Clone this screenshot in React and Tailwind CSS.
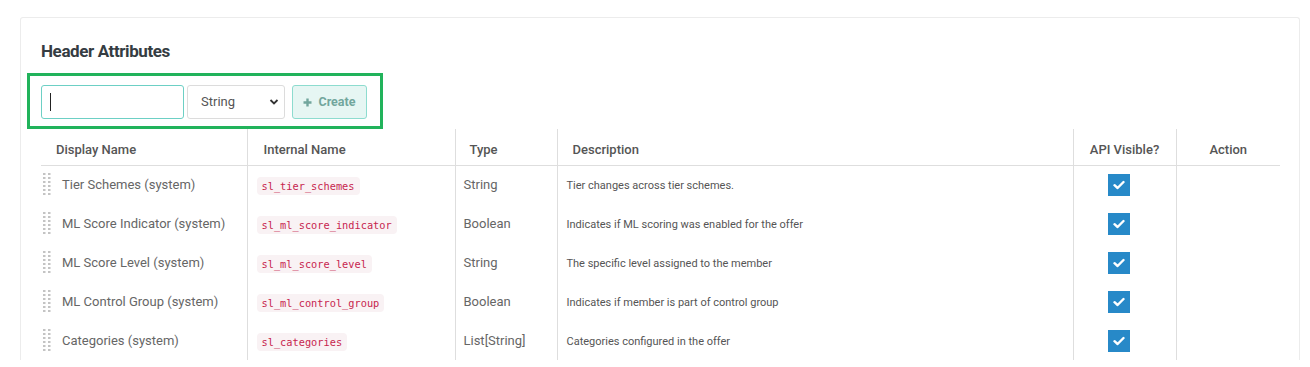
import React from 'react';

const rows = [
    { name: 'Tier Schemes (system)', internal: 'sl_tier_schemes', type: 'String', description: 'Tier changes across tier schemes.' },
    { name: 'ML Score Indicator (system)', internal: 'sl_ml_score_indicator', type: 'Boolean', description: 'Indicates if ML scoring was enabled for the offer' },
    { name: 'ML Score Level (system)', internal: 'sl_ml_score_level', type: 'String', description: 'The specific level assigned to the member' },
    { name: 'ML Control Group (system)', internal: 'sl_ml_control_group', type: 'Boolean', description: 'Indicates if member is part of control group' },
    { name: 'Categories (system)', internal: 'sl_categories', type: 'List[String]', description: 'Categories configured in the offer' },
];

function Grip() {
    const dots = [];
    for (let r = 0; r < 6; r++) {
        dots.push(<rect key={`a${r}`} x="0" y={r * 4} width="2.5" height="2" fill="#c4c4c4" />);
        dots.push(<rect key={`b${r}`} x="5" y={r * 4} width="2.5" height="2" fill="#c4c4c4" />);
    }
    return (
        <svg width="8" height="23" viewBox="0 0 8 23" className="shrink-0">
            {dots}
        </svg>
    );
}

function CheckBox() {
    return (
        <div className="w-[22px] h-[22px] bg-[#2789c8] flex items-center justify-center">
            <svg width="12" height="10" viewBox="0 0 12 10">
                <path d="M1.5 5.2 L4.6 8 L10.5 2" stroke="#fff" strokeWidth="2.4" fill="none" strokeLinecap="round" strokeLinejoin="round" />
            </svg>
        </div>
    );
}

export default function App() {
    return (
        <div className="min-h-screen bg-white font-['Roboto',sans-serif]">
            <div className="ml-[20px] mt-[17px] w-[1280px] border border-b-0 border-[#ececec] rounded-tl-[3px] rounded-tr-[3px] pl-[20px] pr-[19px] pt-[22px]">
                {/* Titulo */}
                <h2 className="text-[17px] leading-[22px] font-bold tracking-[-0.4px] text-[#353c42]">Header Attributes</h2>

                {/* Formulario para crear atributo */}
                <div className="mt-[11px] -ml-[14px] w-[356px] h-[56px] border-[3px] border-[#21b35b] pl-[11px] pt-[9px]">
                    <div className="flex gap-[3px]">
                        <div className="w-[143px] h-[34px] border border-[#6dd0c5] rounded-[3px] flex items-center pl-[8px]">
                            <span className="w-px h-[18px] bg-[#222]" />
                        </div>
                        <div className="w-[98px] h-[34px] border border-[#dcdcdc] rounded-[3px] flex items-center justify-between pl-[13px] pr-[5px] text-[13px] text-[#555]">
                            <span>String</span>
                            <svg width="10" height="8" viewBox="0 0 10 8">
                                <path d="M1.5 2 L5 5.5 L8.5 2" stroke="#333" strokeWidth="1.8" fill="none" />
                            </svg>
                        </div>
                        <div className="ml-[4px] w-[75px] h-[34px] border border-[#8ddccf] bg-[#e6f6f3] rounded-[3px] flex items-center justify-center gap-[6px] text-[12.5px] font-bold text-[#72a69d]">
                            <svg width="9" height="9" viewBox="0 0 9 9">
                                <path d="M4.5 0.5 V8.5 M0.5 4.5 H8.5" stroke="#72a69d" strokeWidth="2.4" />
                            </svg>
                            <span>Create</span>
                        </div>
                    </div>
                </div>

                {/* Tabla de atributos */}
                <table className="w-[1239px] table-fixed border-collapse">
                    <colgroup>
                        <col className="w-[206px]" />
                        <col className="w-[208px]" />
                        <col className="w-[102px]" />
                        <col className="w-[516px]" />
                        <col className="w-[103px]" />
                        <col className="w-[104px]" />
                    </colgroup>
                    <thead>
                        <tr className="h-[36px] border-b border-[#dedede] text-[13px] text-[#555]">
                            <th className="text-left font-medium pl-[15px] pt-[6px]">Display Name</th>
                            <th className="text-left font-medium pl-[16px] pt-[6px] border-l border-[#dedede]">Internal Name</th>
                            <th className="text-left font-medium pl-[14px] pt-[6px] border-l border-[#dedede]">Type</th>
                            <th className="text-left font-medium pl-[15px] pt-[6px] border-l border-[#dedede]">Description</th>
                            <th className="text-center font-medium pt-[6px] border-l border-[#dedede]">API Visible?</th>
                            <th className="text-center font-medium pt-[6px] border-l border-[#dedede]">Action</th>
                        </tr>
                    </thead>
                    <tbody>
                        {rows.map((row) => (
                            <tr key={row.internal} className="h-[39px]">
                                <td className="pl-[2px]">
                                    <div className="flex items-center gap-[11px]">
                                        <Grip />
                                        <span className="text-[13px] text-[#666]">{row.name}</span>
                                    </div>
                                </td>
                                <td className="pl-[9px] border-l border-[#dedede]">
                                    <code className="font-['DejaVu_Sans_Mono',monospace] text-[10.3px] leading-[14px] inline-block px-[5px] py-[2px] rounded-[4px] bg-[#f9f2f4] text-[#c7254e]">
                                        {row.internal}
                                    </code>
                                </td>
                                <td className="pl-[8px] border-l border-[#dedede] text-[13px] text-[#666]">{row.type}</td>
                                <td className="pl-[9px] pt-[3px] border-l border-[#dedede] text-[11px] text-[#555]">{row.description}</td>
                                <td className="border-l border-[#dedede]">
                                    <div className="flex justify-center pr-[11px]">
                                        <CheckBox />
                                    </div>
                                </td>
                                <td className="border-l border-[#dedede]" />
                            </tr>
                        ))}
                    </tbody>
                </table>
            </div>
        </div>
    );
}
